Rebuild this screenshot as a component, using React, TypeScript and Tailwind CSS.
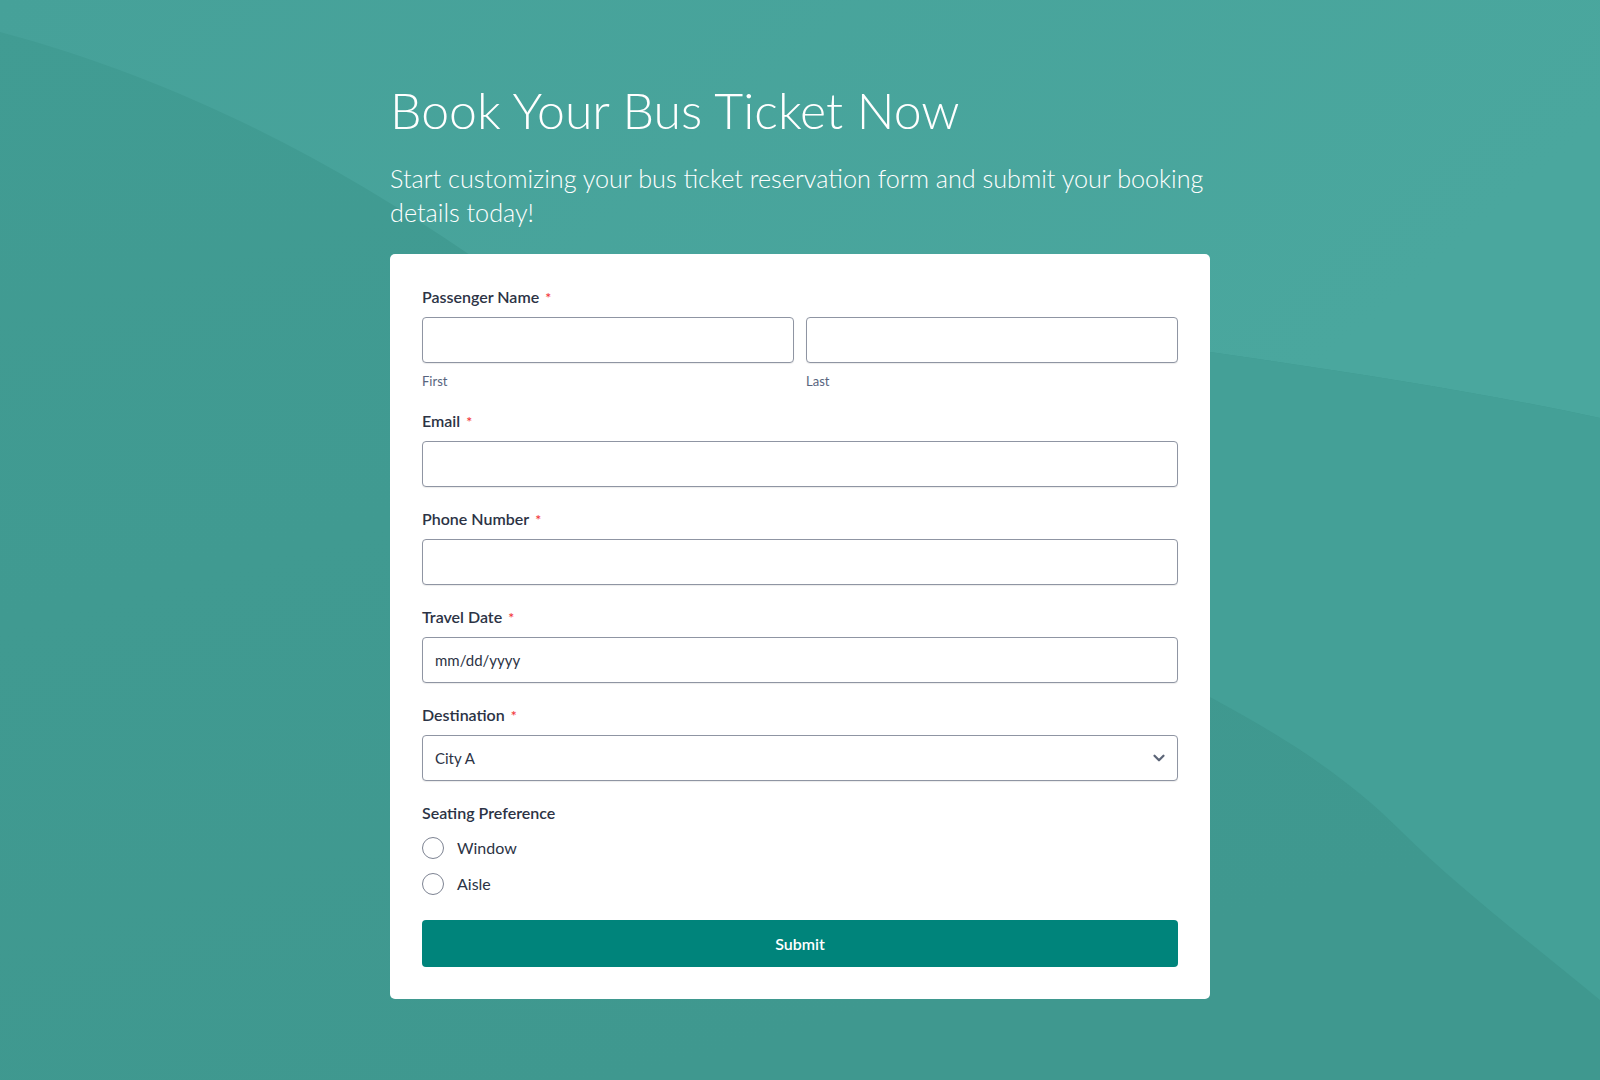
import React from 'react';
import { ChevronDown } from 'lucide-react';

const Required = () => (
  <span className="ml-[6px] text-[14px] text-[#f23a3c]">*</span>
);

const FieldLabel: React.FC<{ text: string; required?: boolean }> = ({ text, required }) => (
  <div className="h-[20px] pt-[1px] text-[16px] leading-[20px] font-semibold text-[#2c3345] mb-[11px]">
    {text}
    {required && <Required />}
  </div>
);

const Box: React.FC<{ children?: React.ReactNode }> = ({ children }) => (
  <div className="h-[46px] w-full rounded-[4px] border border-[#8f95a3] bg-white shadow-[0_1px_1px_rgba(0,0,0,0.08)] flex items-center px-[12px] text-[15px] text-[#2c3345]">
    {children}
  </div>
);

const Radio: React.FC<{ label: string }> = ({ label }) => (
  <div className="h-[36px] flex items-center gap-[13px]">
    <span className="w-[22px] h-[22px] rounded-full border border-[#7d8392] bg-white" />
    <span className="text-[16px] text-[#2c3345]">{label}</span>
  </div>
);

const Background = () => (
  <svg className="absolute inset-0 w-full h-full" viewBox="0 0 1600 1080" preserveAspectRatio="none">
    <defs>
      <linearGradient id="bg" x1="0" y1="0" x2="0.4" y2="1">
        <stop offset="0" stopColor="#419c93" />
        <stop offset="1" stopColor="#3f988f" />
      </linearGradient>
      <linearGradient id="top" x1="0" y1="0" x2="1" y2="0.3">
        <stop offset="0" stopColor="#46a199" />
        <stop offset="1" stopColor="#4aa79e" />
      </linearGradient>
    </defs>
    <rect width="1600" height="1080" fill="url(#bg)" />
    <path
      d="M0 32 C 180 80, 330 160, 470 255 L 1210 352 C 1350 372, 1480 392, 1600 418 L 1600 0 L 0 0 Z"
      fill="url(#top)"
    />
    <path
      d="M1210 697 C 1290 740, 1350 780, 1400 830 C 1460 890, 1540 950, 1600 1000 L 1600 418 C 1480 392, 1350 372, 1210 352 Z"
      fill="#44a097"
    />
  </svg>
);

export default function App() {
  return (
    <div
      className="relative min-h-[1080px] w-full overflow-hidden"
      style={{ fontFamily: 'Lato, "Noto Sans", sans-serif' }}
    >
      <Background />
      <div className="relative w-[820px] mx-auto pt-[80px] pb-[80px]">
        <h1 className="text-[50px] leading-[1.2] font-light text-white">Book Your Bus Ticket Now</h1>
        <p className="mt-[21px] text-[25.2px] leading-[34px] font-light text-white">
          Start customizing your bus ticket reservation form and submit your booking details today!
        </p>

        <div className="mt-[25px] bg-white rounded-[5px] px-[32px] pt-[32px] pb-[32px] flex flex-col gap-[21px]">
          <div>
            <FieldLabel text="Passenger Name" required />
            <div className="grid grid-cols-2 gap-[12px]">
              <div>
                <Box />
                <div className="mt-[10px] text-[13px] leading-[16px] text-[#57647e]">First</div>
              </div>
              <div>
                <Box />
                <div className="mt-[10px] text-[13px] leading-[16px] text-[#57647e]">Last</div>
              </div>
            </div>
          </div>

          <div>
            <FieldLabel text="Email" required />
            <Box />
          </div>

          <div>
            <FieldLabel text="Phone Number" required />
            <Box />
          </div>

          <div>
            <FieldLabel text="Travel Date" required />
            <Box>mm/dd/yyyy</Box>
          </div>

          <div>
            <FieldLabel text="Destination" required />
            <Box>
              <span className="flex-1">City A</span>
              <ChevronDown size={18} strokeWidth={3} className="text-[#5c6577] -mr-[3px]" />
            </Box>
          </div>

          <div>
            <div className="h-[20px] pt-[1px] text-[16px] leading-[20px] font-semibold text-[#2c3345]">Seating Preference</div>
            <div className="mt-[8px] flex flex-col">
              <Radio label="Window" />
              <Radio label="Aisle" />
            </div>
            <button className="mt-[18px] w-full h-[47px] rounded-[4px] bg-[#00847b] text-white text-[16px] font-semibold">
              Submit
            </button>
          </div>
        </div>
      </div>
    </div>
  );
}
